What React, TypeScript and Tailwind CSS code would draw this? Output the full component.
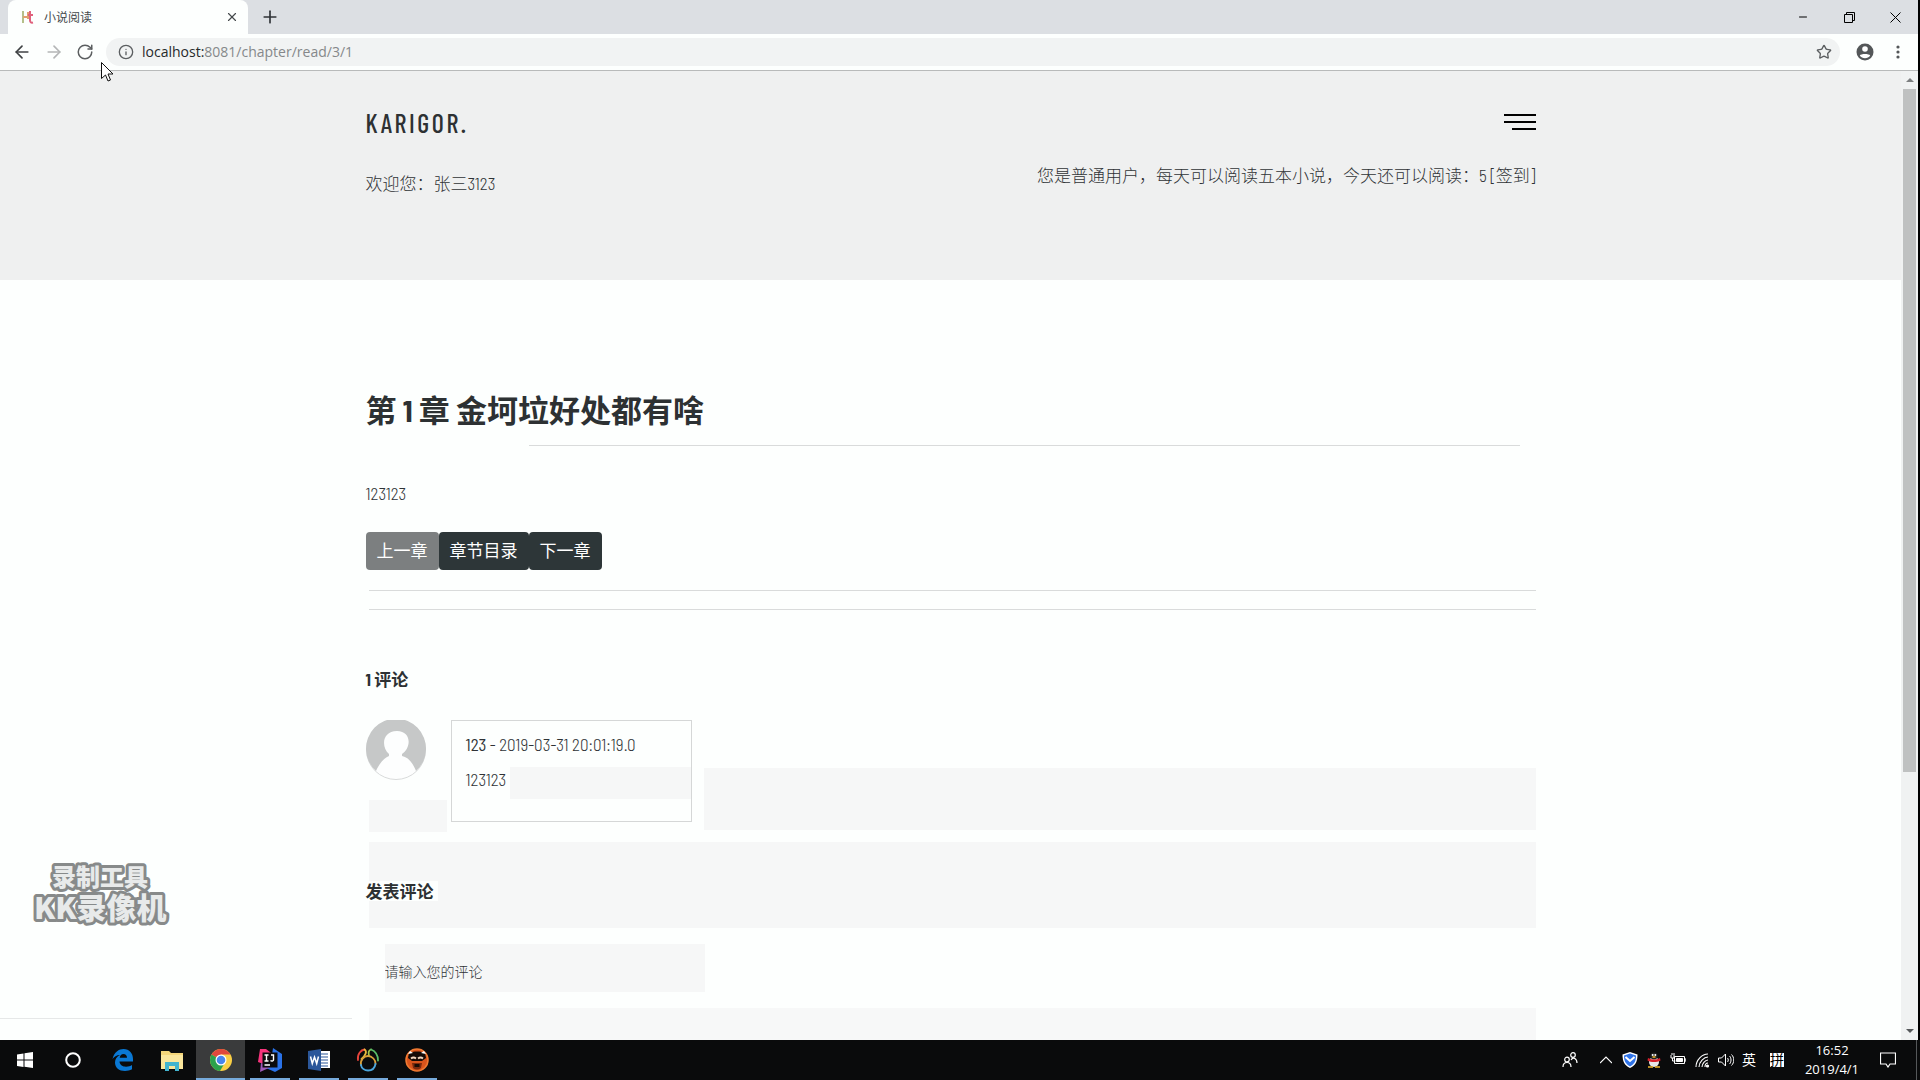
import React from 'react';
import { ArrowLeft, ArrowRight, RotateCw, Info, Star, X, Plus, Minus } from 'lucide-react';

const tabs = [{ title: '小说阅读' }];

const Favicon: React.FC = () => (
  <svg className="w-4 h-4" viewBox="0 0 16 16" fill="none" strokeWidth="2">
    <path d="M3 2v12M3 8h5" stroke="#b5c08a" />
    <path d="M7 8H3M8 3v7" stroke="#e0a070" />
    <path d="M10 2v9c0 2 1 3 3 2.500M8 6h5" stroke="#e0607c" />
  </svg>
);

const BrowserTabs: React.FC = () => (
  <div className="flex h-[34px] items-center bg-[#dcdfe3]">
    {tabs.map((tab) => (
      <div key={tab.title} className="ml-2 flex h-full w-60 items-center rounded-t-lg bg-[#fdfffe] pl-3 pr-2 text-xs font-normal text-[#45494c]">
        <Favicon />
        <span className="ml-2 flex-1">{tab.title}</span>
        <button type="button" aria-label="Close tab" className="flex h-4 w-4 items-center justify-center">
          <X className="h-[14px] w-[14px]" />
        </button>
      </div>
    ))}
    <button type="button" aria-label="New tab" className="ml-3 text-[#2f3337]">
      <Plus className="h-5 w-5" />
    </button>
    <div className="ml-auto flex items-center text-black">
      <button type="button" aria-label="Minimize" className="flex w-[46px] justify-center">
        <Minus className="h-3 w-3" strokeWidth={2} />
      </button>
      <button type="button" aria-label="Restore" className="flex w-[46px] justify-center">
        <svg className="h-[11px] w-[11px]" viewBox="0 0 11 11" fill="none" stroke="currentColor">
          <path d="M.5 2.500h8v8h-8zM2.500 2.500v-2h8v8h-2" />
        </svg>
      </button>
      <button type="button" aria-label="Close" className="flex w-[46px] justify-center">
        <svg className="h-[11px] w-[11px]" viewBox="0 0 11 11" fill="none" stroke="currentColor">
          <path d="M.5.5l10 10M10.500.5l-10 10" />
        </svg>
      </button>
    </div>
  </div>
);

const Toolbar: React.FC = () => (
  <div className="flex h-[37px] items-center border-b border-[#b8baba] bg-[#fdfffe] px-3 text-[#5b5e60]">
    <button type="button" aria-label="Back" className="mr-3"><ArrowLeft className="h-5 w-5 text-[#3f4244]" /></button>
    <button type="button" aria-label="Forward" className="mr-3"><ArrowRight className="h-5 w-5 text-[#b4b6b7]" /></button>
    <button type="button" aria-label="Reload" className="mr-3"><RotateCw className="h-[18px] w-[18px]" strokeWidth={2} /></button>
    <div className="flex h-7 flex-1 items-center rounded-full bg-[#f1f3f3] pl-3 pr-2 font-['Open_Sans'] text-sm font-normal">
      <Info className="mr-2 h-4 w-4" />
      <label htmlFor="address" className="text-[#26292b]">localhost:</label>
      <input id="address" className="min-w-0 flex-1 bg-transparent text-[#85888a] outline-none" defaultValue="8081/chapter/read/3/1" />
      <button type="button" aria-label="Bookmark"><Star className="h-4 w-4" /></button>
    </div>
    <button type="button" aria-label="Account" className="ml-4">
      <svg className="h-[18px] w-[18px]" viewBox="0 0 18 18">
        <circle cx="9" cy="9" r="8.500" fill="#545759" />
        <circle cx="9" cy="6" r="2.800" fill="#fff" />
        <path d="M3.800 12.500c1-2 9.400-2 10.400 0c-2.200 3.500-8.200 3.500-10.400 0z" fill="#fff" />
      </svg>
    </button>
    <button type="button" aria-label="Menu" className="ml-4">
      <svg className="h-4 w-4" viewBox="0 0 16 16" fill="#545759">
        <circle cx="8" cy="3" r="1.600" /><circle cx="8" cy="8" r="1.600" /><circle cx="8" cy="13" r="1.600" />
      </svg>
    </button>
  </div>
);

const PageHeader: React.FC = () => (
  <header className="h-[209px] bg-[#eff0f0] pt-10">
    <div className="mx-auto w-full max-w-[1170px]">
      <div className="flex items-start justify-between">
        <a href="#home" className="font-['Barlow_Condensed','Roboto_Condensed',sans-serif] text-[26px] leading-6 font-medium tracking-widest text-[#2d3133]">
          KARIGOR.
        </a>
        <button type="button" aria-label="Navigation" className="mt-[3px] flex flex-col items-end gap-[5px]">
          <span className="h-0.5 w-8 bg-black" />
          <span className="h-0.5 w-8 bg-black" />
          <span className="h-0.5 w-6 bg-black" />
        </button>
      </div>
      <div className="mt-7 flex items-start justify-between leading-6">
        <p className="mt-2">欢迎您：张三3123</p>
        <p>
          您是普通用户，每天可以阅读五本小说，今天还可以阅读：5 <a href="#sign">[签到]</a>
        </p>
      </div>
    </div>
  </header>
);

const Avatar: React.FC = () => (
  <svg className="h-[60px] w-[60px] shrink-0" viewBox="0 0 60 60">
    <circle cx="30" cy="30" r="29.500" fill="#fdfefe" stroke="#d9dbdb" />
    <path d="M10 51A30 30 0 1 1 50 51C47 43 42 37 36 36V34C46 27 45 11 31 11C16 11 15 27 23 34V36C18 38 13 44 10 51Z" fill="#c6c8c8" />
  </svg>
);

const Chapter: React.FC = () => (
  <main className="mx-auto w-full max-w-[1170px] pt-[108px]">
    <h1 className="text-[31px] leading-[44px] font-bold text-[#2d3133]">第 1 章 金坷垃好处都有啥</h1>
    <hr className="ml-[163px] mr-4 mt-[13px] border-[#d9dbdb]" />
    <p className="mt-[35px] leading-6">123123</p>
    <div className="mt-[27px] flex font-normal text-white">
      <button type="button" disabled className="h-[38px] rounded bg-[#7c7f80] px-[11px]">上一章</button>
      <button type="button" className="h-[38px] rounded bg-[#2d3638] px-[11px]">章节目录</button>
      <button type="button" className="h-[38px] rounded bg-[#2d3638] px-[11px]">下一章</button>
    </div>
    <hr className="ml-[3px] mt-5 border-[#d9dbdb]" />
    <hr className="ml-[3px] mt-[18px] border-[#d9dbdb]" />

    <h2 className="mt-[57px] leading-6 font-bold text-[#2d3133]">1 评论</h2>
    <div className="mt-[29px] flex items-start">
      <div className="w-[85px] shrink-0">
        <Avatar />
        <div className="mt-5 ml-[3px] mr-1 h-8 bg-[#f6f7f7]" />
      </div>
      <div className="h-[102px] w-[241px] border border-[#d5d7d7] bg-[#fdfffe] pt-[11px] pl-[14px] leading-6">
        <p><b>123</b> - 2019-03-31 20:01:19.0</p>
        <p className="mt-[11px] flex">
          123123<span className="ml-1 h-8 flex-1 bg-[#f6f7f7]" />
        </p>
      </div>
      <div className="mt-12 ml-3 h-[62px] flex-1 bg-[#f6f7f7]" />
    </div>

    <section className="ml-[3px] mt-[10px] h-[86px] bg-[#f6f7f7]">
      <h2 className="-ml-[3px] pt-[37px] leading-6 font-bold text-[#2d3133]">
        <span className="bg-[#fdfffe] pr-1">发表评论</span>
      </h2>
    </section>
    <form className="mt-4 ml-[19px]">
      <textarea
        aria-label="请输入您的评论"
        placeholder="请输入您的评论"
        className="block h-12 w-80 resize-none bg-[#f6f7f7] pt-[18px] text-sm leading-5 placeholder:text-[#2f3336]"
      />
    </form>
    <div className="ml-[3px] mt-4 h-8 bg-[#f7f8f8]" />
  </main>
);

const Scrollbar: React.FC = () => (
  <div className="flex w-[17px] shrink-0 flex-col items-center bg-[#f0f2f2]">
    <svg className="my-1.5 h-[6px] w-2" viewBox="0 0 8 6"><path d="M0 5l4-4 4 4z" fill="#7c7f80" /></svg>
    <div className="h-[683px] w-[13px] bg-[#bfc1c1]" />
    <svg className="mt-auto mb-1.5 h-[6px] w-2" viewBox="0 0 8 6"><path d="M0 1l4 4 4-4z" fill="#55585a" /></svg>
  </div>
);

const apps = [
  {
    name: 'Start',
    open: false,
    icon: <path d="M4 6.500l6.500-1V11.500H4zM11.500 5.300l8.500-1.300v7.500h-8.500zM4 12.500h6.500v6.500L4 18zM11.500 12.500H20V20l-8.500-1.200z" fill="#fff" />,
  },
  { name: 'Cortana', open: false, icon: <circle cx="11" cy="12" r="6.800" fill="none" stroke="#fff" strokeWidth="2" /> },
  {
    name: 'Edge',
    open: false,
    icon: <path d="M1.500 11C3 4 8 1 12.500 1C18.500 1 22 5.500 22 11v2.500H8.500C8.700 17 12 18.700 15 18.700c2.500 0 4.500-.7 6-1.600v4.200c-2 1.200-4.500 1.700-7 1.700C8 23 4 19.500 4 14.500C4 11 6 8.500 9 7C5.500 7 3 9 1.500 11zM8.700 9.800H16C16 7.500 14.500 6 12.500 6S9 7.500 8.700 9.800z" fill="#0a78d4" />,
  },
  {
    name: 'Explorer',
    open: false,
    icon: (
      <>
        <path d="M1 3h8l2 2h12v16H1z" fill="#f4d67a" />
        <path d="M1 7h22v14H1z" fill="#fae69c" />
        <path d="M5 23v-9h14v9h-4v-5H9v5z" fill="#42b4cf" />
      </>
    ),
  },
  {
    name: 'Chrome',
    open: true,
    icon: (
      <>
        <circle cx="12" cy="12" r="11" fill="#f9cf45" />
        <path d="M12 12L2.500 6.500A11 11 0 0 1 21.500 6.500H12z" fill="#e0483c" />
        <path d="M2.500 6.500A11 11 0 0 0 11 23l5-8.500L12 12z" fill="#2ba24c" />
        <circle cx="12" cy="12" r="5.500" fill="#fff" />
        <circle cx="12" cy="12" r="4.300" fill="#4886ec" />
      </>
    ),
  },
  {
    name: 'IntelliJ',
    open: true,
    icon: (
      <>
        <path d="M2 1h6l9 7-9 9-8-3z" fill="#f7347c" />
        <path d="M15 0l9 6v14l-7 4-9-4 6-13z" fill="#2a72e8" />
        <path d="M3 15l-1 9 11-5z" fill="#9c59b8" />
        <path d="M4.500 4.500h15v15h-15z" fill="#0b0b0d" />
        <path d="M6.500 7h4M8.500 7v6M6.500 13h4M13 7h3.200M15.500 7v5c0 1-2 1.500-3 .5M6.500 17H12" fill="none" stroke="#fff" strokeWidth="1.400" />
      </>
    ),
  },
  {
    name: 'Word',
    open: true,
    icon: (
      <>
        <path d="M12 3h11v17H12z" fill="#fff" />
        <path d="M14 6h7M14 9h7M14 12h7M14 15h7M14 18h7" stroke="#2b579a" strokeWidth="1.200" />
        <path d="M1 3l13-2v22L1 21z" fill="#2b579a" />
        <path d="M3.500 8.500l1.800 7L7.500 9l2.200 6.500 1.800-7" fill="none" stroke="#fff" strokeWidth="1.500" />
      </>
    ),
  },
  {
    name: 'Navicat',
    open: true,
    icon: (
      <g fill="none" strokeWidth="1.800" strokeLinecap="round">
        <path d="M2 12C1 6 5 2 8.500 1.500" stroke="#e8443c" />
        <path d="M8.500 1.500c3 2 1 6-3 9.500" stroke="#e8b93c" />
        <path d="M13 8c-1-4 0-6 2-6.500" stroke="#a9c84e" />
        <path d="M15 1.500c5 2 7 6 7 11" stroke="#58bd68" />
        <path d="M5 17c-1-5 3-9 7-9s8 4 7.500 8" stroke="#d9a03a" />
        <path d="M5 17c1 7 13 8 14.500-1" stroke="#4ba6dd" />
      </g>
    ),
  },
  {
    name: 'Recorder',
    open: true,
    icon: (
      <>
        <circle cx="12" cy="12" r="11" fill="#d9541c" stroke="#f07a32" strokeWidth="1.500" />
        <path d="M4 5c4-2 12-2 16 0l1 5-4 3H7l-4-3z" fill="#140a06" />
        <path d="M7 15h10l-1 5c-3 2-5 2-8 0z" fill="#7c2a0e" />
        <path d="M3 6l2-3 3 2zM21 6l-2-3-3 2z" fill="#fff" />
        <path d="M6 10.500q2.500-2 5 0M18 10.500q-2.500-2-5 0" fill="none" stroke="#f4d8c0" strokeWidth="1.800" />
        <path d="M9.500 16h5v3h-5z" fill="#190c05" />
      </>
    ),
  },
];

const Tray: React.FC = () => (
  <div className="ml-auto flex items-center font-normal text-white">
    <svg className="h-4 w-4" viewBox="0 0 16 16" fill="none" stroke="currentColor" strokeWidth="1.200">
      <circle cx="5" cy="7.500" r="2.300" /><path d="M1 15c0-6 8-6 8 0" />
      <circle cx="11" cy="3" r="2.300" /><path d="M9 8c2-3.500 6-1.500 6 3" />
    </svg>
    <svg className="ml-[22px] h-3 w-3" viewBox="0 0 12 12" fill="none" stroke="currentColor" strokeWidth="1.200"><path d="M0 9l6-6 6 6" /></svg>
    <svg className="ml-[10px] h-4 w-4" viewBox="0 0 16 16">
      <path d="M8 0l7.500 2.500c0 7-2 11-7.500 13.500C2.500 13.500.5 9.500.5 2.500z" fill="#fff" />
      <path d="M8 1.500l6 2c0 5.500-1.500 8.500-6 11-4.500-2.500-6-5.500-6-11z" fill="#2f73e8" />
      <path d="M3.500 5L8 9l4.500-4" stroke="#fff" strokeWidth="2" fill="none" />
    </svg>
    <svg className="ml-2 h-4 w-4" viewBox="0 0 16 16">
      <ellipse cx="8" cy="10" rx="5" ry="5" fill="#e8e8e8" />
      <circle cx="8" cy="4" r="3.500" fill="#222" />
      <circle cx="6.700" cy="3" r="1" fill="#fff" /><circle cx="9.300" cy="3" r="1" fill="#fff" />
      <path d="M2 6c4 2 8 2 12 0l.5 2.500c-4 2-9 2-13 0z" fill="#d8202c" />
      <path d="M2 15h5M9 15h5M6.500 5h3" stroke="#f0b82c" strokeWidth="1.500" />
    </svg>
    <svg className="ml-2 h-4 w-4" viewBox="0 0 16 16" fill="none" stroke="currentColor">
      <path d="M1 3v3h3V3M2 3V1M4 3V1M2.500 6v3h3M4.500 4.500h10v7h-10zM14.500 7H16v2h-1.500" /><path d="M6.500 6.500h6v3h-6z" fill="currentColor" />
    </svg>
    <svg className="ml-2 h-4 w-4" viewBox="0 0 16 16" fill="none" stroke="currentColor" strokeWidth="1.100">
      <path d="M2 15C2 8 8 2 14 2M5 15c0-5 5-10 9-10M8 15c0-3 3-7 6-7M11 15c0-2 1-4 3-4" /><circle cx="13.500" cy="14" r="1" fill="currentColor" />
    </svg>
    <svg className="ml-2 h-4 w-4" viewBox="0 0 16 16" fill="none" stroke="currentColor">
      <path d="M.5 6h3l4-4v12l-4-4h-3zM9.500 6c1 1 1 3 0 4M11.500 4c2 2 2 6 0 8M13.500 2.500c3 3 3 8 0 11" />
    </svg>
    <span className="ml-2 text-sm">英</span>
    <span className="ml-[14px] bg-white text-sm leading-[14px] text-black">拼</span>
    <div className="ml-5 w-14 text-center font-['Open_Sans'] text-[13px] leading-[19px]">
      <div>16:52</div>
      <div>2019/4/1</div>
    </div>
    <svg className="mr-5 ml-5 h-4 w-4" viewBox="0 0 16 16" fill="none" stroke="currentColor" strokeWidth="1.200"><path d="M.5 1h15v11H10l-2 3-2-3H.5z" /></svg>
    <div className="mr-[3px] h-10 border-l border-[#55585a]" />
  </div>
);

const Taskbar: React.FC = () => (
  <footer className="flex h-10 shrink-0 bg-[#0a0b0c]">
    {apps.map((app) => (
      <button
        key={app.name}
        type="button"
        aria-label={app.name}
        className={`flex h-10 w-[49px] flex-col items-center pt-2 ${app.name === 'Chrome' ? 'bg-[#3a3b3c]' : ''}`}
      >
        <svg className="h-6 w-6 shrink-0" viewBox="0 0 24 24">{app.icon}</svg>
        {app.open && <span className={`mt-auto h-0.5 bg-[#76aadb] ${app.name === 'Chrome' ? 'w-full' : 'w-10'}`} />}
      </button>
    ))}
    <Tray />
  </footer>
);

const App: React.FC = () => (
  <div className="relative flex h-screen flex-col overflow-hidden bg-[#fdfffe] font-['Barlow_Semi_Condensed','Dosis','Roboto_Condensed','Barlow_Condensed','Noto_Sans_CJK_SC',sans-serif] text-[17px] font-light text-[#2f3336]">
    <div className="flex min-h-0 flex-1 flex-col border-r-2 border-black">
      <BrowserTabs />
      <Toolbar />
      <div className="flex min-h-0 flex-1">
        <div className="min-w-0 flex-1 overflow-hidden">
          <PageHeader />
          <Chapter />
        </div>
        <Scrollbar />
      </div>
    </div>
    <Taskbar />

    <div className="absolute bottom-[61px] left-0 w-[352px] border-t border-[#e6e8e8]" />
    {/* Recorder watermark */}
    <svg className="absolute bottom-[146px] left-8 h-[82px] w-[144px]" viewBox="0 0 144 82" fill="#e8eaea" stroke="#878a8a" strokeWidth="6" paintOrder="stroke" strokeLinejoin="round" fontFamily="'Noto Sans CJK SC', sans-serif" fontWeight="900">
      <text x="20" y="34" fontSize="24">录制工具</text>
      <text x="2" y="67" fontSize="30">KK录像机</text>
    </svg>
    <svg className="absolute top-[62px] left-[101px] h-5 w-3" viewBox="0 0 12 20" fill="#fff" stroke="#111">
      <path d="M.5.5v16l4-3.500 2.500 6 2.500-1-2.500-6h5z" />
    </svg>
  </div>
);

export default App;
